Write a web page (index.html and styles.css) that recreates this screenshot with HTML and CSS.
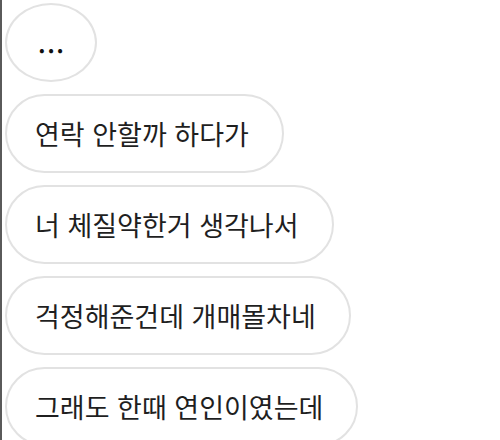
FILE: index.html
```html
<!DOCTYPE html>
<html lang="ko">
<head>
<meta charset="utf-8">
<link rel="stylesheet" href="styles.css">
</head>
<body>
<div class="chat">
  <div class="bubble dots">...</div>
  <div class="bubble">연락 안할까 하다가</div>
  <div class="bubble">너 체질약한거 생각나서</div>
  <div class="bubble">걱정해준건데 개매몰차네</div>
  <div class="bubble">그래도 한때 연인이였는데</div>
</div>
</body>
</html>
```
FILE: styles.css
```css
html, body {
  margin: 0;
  padding: 0;
  background: #ffffff;
}
.chat {
  width: 500px;
  height: 440px;
  box-sizing: border-box;
  border-left: 2px solid #5a5a5a;
  padding: 3px 0 0 3px;
  display: flex;
  flex-direction: column;
  align-items: flex-start;
  gap: 12px;
  overflow: hidden;
  font-family: "Noto Sans CJK KR", "Noto Sans", sans-serif;
}
.bubble {
  box-sizing: border-box;
  height: 79px;
  flex: none;
  display: flex;
  align-items: center;
  padding: 0 33px 0 28px;
  border: 2px solid #e2e2e2;
  border-radius: 40px;
  font-size: 27px;
  color: #1f1f1f;
  white-space: nowrap;
}
.dots {
  width: 92px;
  justify-content: center;
  padding: 0 0 0 2px;
  border-radius: 50%;
  font-size: 22px;
  font-weight: bold;
  letter-spacing: 2px;
  color: #111;
}
```
